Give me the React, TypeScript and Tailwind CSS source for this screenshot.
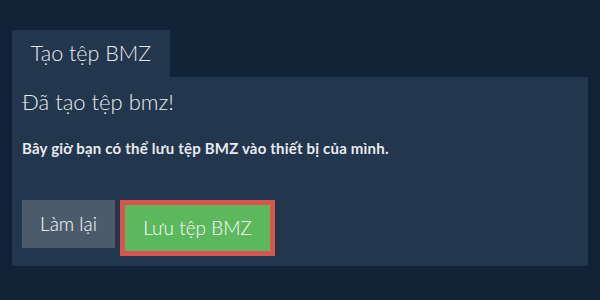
import React from "react";

export default function App() {
  return (
    <div className="w-[600px] h-[300px] bg-[#112337] pt-[30px] px-[12px] text-[#e8ebee]" style={{ fontFamily: "Lato, 'Noto Sans', sans-serif" }}>
      <div className="flex">
        <div className="w-[158px] h-[47px] bg-[#22364d] flex items-center justify-center text-[21.5px] font-light">Tạo tệp BMZ</div>
      </div>
      <div className="bg-[#22364d] h-[189px] px-[10px] pt-[10px]">
        <div className="text-[22px] leading-[30px] font-light">Đã tạo tệp bmz!</div>
        <div className="mt-[22px] text-[15px] tracking-[0.2px] font-bold leading-[18px]">Bây giờ bạn có thể lưu tệp BMZ vào thiết bị của mình.</div>
        <div className="mt-[43px] flex gap-[5px] items-start">
          <button className="w-[93px] h-[48px] bg-[#4c5b6b] text-[19px] font-light text-white">Làm lại</button>
          <button className="w-[155px] h-[56px] bg-[#5cb85c] border-[5px] border-[#d9534f] text-[19px] font-light text-white">Lưu tệp BMZ</button>
        </div>
      </div>
    </div>
  );
}
